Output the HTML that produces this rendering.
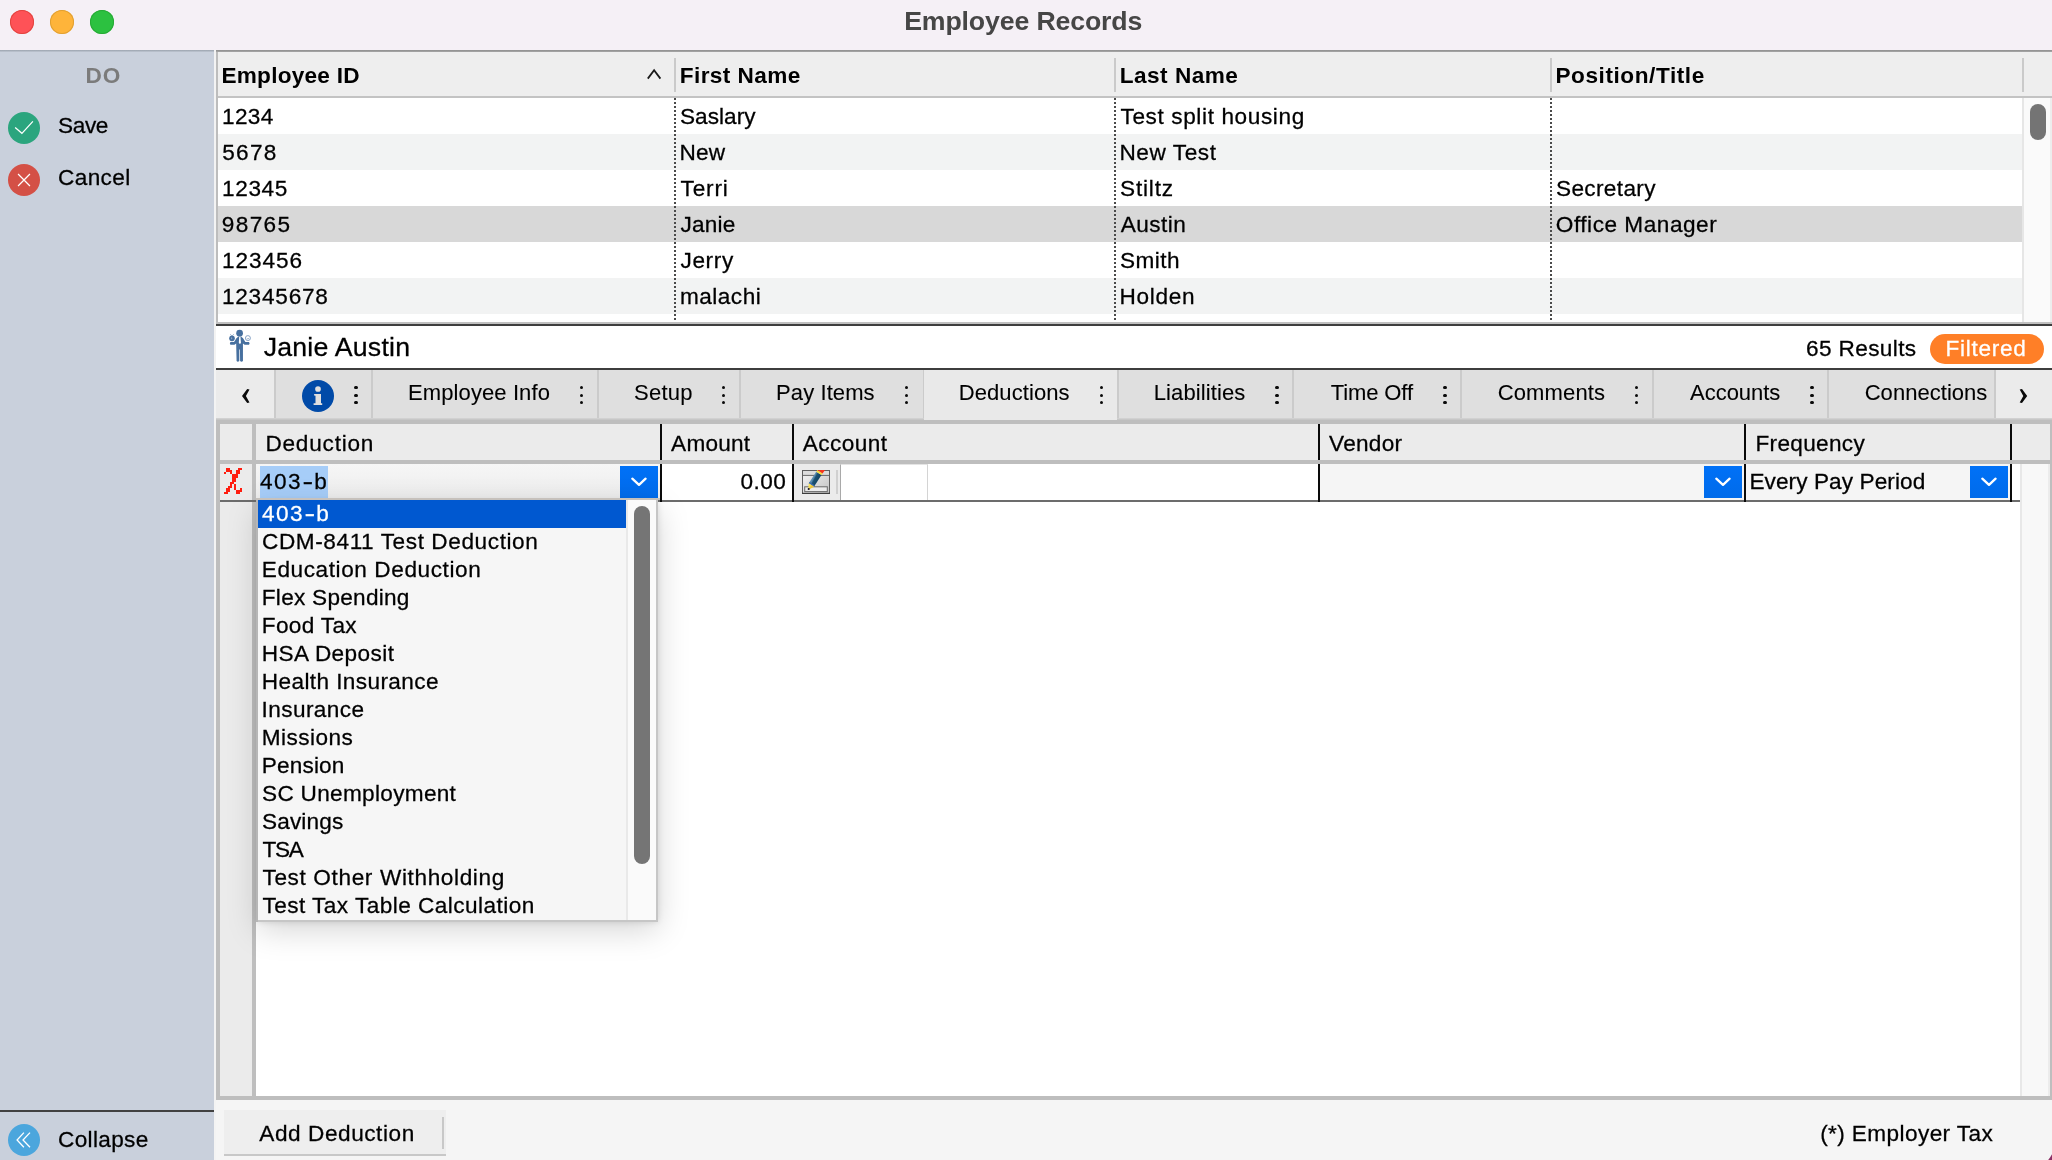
<!DOCTYPE html>
<html><head><meta charset="utf-8"><title>Employee Records</title>
<style>
*{box-sizing:border-box;margin:0;padding:0}
html,body{width:2052px;height:1160px;overflow:hidden}
body{position:relative;background:#f5f5f5;font-family:"Liberation Sans",sans-serif;font-size:22px;color:#000;letter-spacing:0.7px}
.a{position:absolute}
.t{position:absolute;white-space:nowrap;line-height:26px;height:26px;-webkit-text-stroke:0.28px}
#txt{position:absolute;left:0;top:0;width:2052px;height:1160px;will-change:transform}
.b{font-weight:bold;-webkit-text-stroke:0}
#titlebar{left:0;top:0;width:2052px;height:50px;background:#f5f0f6}
.tl{position:absolute;top:10px;width:24px;height:24px;border-radius:12px}
#sidebar{left:0;top:50px;width:214px;height:1110px;background:#c9d0dc}
.circ{position:absolute;left:8px;width:32px;height:32px;border-radius:16px}
.hsep{position:absolute;top:58px;width:2px;height:34px;background:#cacaca}
.dot{position:absolute;top:98px;width:2px;height:222px;background-image:linear-gradient(to bottom,#4a4a4a 50%,rgba(255,255,255,0) 50%);background-size:2px 4px}
.row{position:absolute;left:218px;width:1804px;height:36px}
.tab{position:absolute;top:370px;height:48px;background:#dfdfdf;font-size:22px;letter-spacing:0}
.tab.sel{background:#e9e9e9;height:50px}

.kebab{position:absolute;width:3.3px;height:3.3px;border-radius:1.65px;background:#0a0a0a}
.vsep{position:absolute;top:424px;width:2px;height:78px;background:#0a0a0a}
.dd{position:absolute;top:466px;width:38px;height:32px;background:linear-gradient(#0071f7,#006bea)}
.li{position:absolute;left:0;width:368px;height:28px}
</style></head>
<body>
<div class="a" id="titlebar">
<div class="tl" style="left:10px;background:#fe5257;box-shadow:inset 0 0 0 1px #e2443f"></div>
<div class="tl" style="left:50px;background:#feb43a;box-shadow:inset 0 0 0 1px #e1a032"></div>
<div class="tl" style="left:90px;background:#2cc140;box-shadow:inset 0 0 0 1px #27aa35"></div>
</div>
<div class="a" style="left:216px;top:50px;width:1836px;height:2px;background:linear-gradient(#8e8e8e,#a8a8a8)"></div>
<div class="a" id="sidebar"></div>
<div class="a" style="left:0;top:50px;width:214px;height:2px;background:linear-gradient(#9aa2ad,#c0c7d3)"></div>
<div class="circ" style="top:112px;background:#2ba57e"><svg width="32" height="32" viewBox="0 0 32 32"><path d="M7.15 15.5 L13.9 21.3 L24.9 9.3" fill="none" stroke="#fff" stroke-width="1.25"/></svg></div>
<div class="circ" style="top:164px;background:#d45046"><svg width="32" height="32" viewBox="0 0 32 32"><path d="M10.05 10.05 L21.95 21.95 M21.95 10.05 L10.05 21.95" fill="none" stroke="#fff" stroke-width="1.25"/></svg></div>
<div class="a" style="left:0;top:1110px;width:214px;height:2px;background:#414141"></div>
<div class="circ" style="top:1124px;background:#4ba6dd"><svg width="32" height="32" viewBox="0 0 32 32"><path d="M15.9 8.6 L9.07 16 L15.9 23.2 M22 8.6 L15 16 L22 23.2" fill="none" stroke="#fff" stroke-width="1.3"/></svg></div>
<div class="a" style="left:214px;top:50px;width:2px;height:1110px;background:#f3f3f3"></div>
<div class="a" style="left:216px;top:52px;width:1836px;height:270px;background:#fff"></div>
<div class="a" style="left:216px;top:52px;width:1836px;height:44px;background:#eeeeee"></div>
<div class="a" style="left:216px;top:96px;width:1836px;height:2px;background:#c3c3c3"></div>
<div class="row" style="top:98px;background:#ffffff"></div>
<div class="row" style="top:134px;background:#f2f3f3"></div>
<div class="row" style="top:170px;background:#ffffff"></div>
<div class="row" style="top:206px;background:#d8d8d8"></div>
<div class="row" style="top:242px;background:#ffffff"></div>
<div class="row" style="top:278px;background:#f2f3f3"></div>
<div class="hsep" style="left:674px"></div>
<div class="hsep" style="left:1114px"></div>
<div class="hsep" style="left:1550px"></div>
<div class="hsep" style="left:2022px"></div>
<div class="dot" style="left:674px"></div>
<div class="dot" style="left:1114px"></div>
<div class="dot" style="left:1550px"></div>
<svg class="a" style="left:644px;top:64px" width="20" height="20" viewBox="0 0 20 20"><path d="M3.8 14.6 L10.1 6.3 L16.4 14.6" fill="none" stroke="#1a1a1a" stroke-width="1.8"/></svg>
<div class="a" style="left:2022px;top:98px;width:28px;height:224px;background:#fafafa;border-left:2px solid #e6e6e6"></div>
<div class="a" style="left:2050px;top:98px;width:2px;height:224px;background:#ededed"></div>
<div class="a" style="left:2030px;top:104px;width:16px;height:36px;border-radius:8px;background:#747474"></div>
<div class="a" style="left:216px;top:52px;width:2px;height:272px;background:#bdbdbd"></div>
<div class="a" style="left:216px;top:322px;width:1836px;height:2px;background:#c0c0c0"></div>
<div class="a" style="left:216px;top:324px;width:1836px;height:2px;background:#3e3e3e"></div>
<div class="a" style="left:216px;top:326px;width:1836px;height:42px;background:#fff"></div>
<div class="a" style="left:216px;top:368px;width:1836px;height:2px;background:#3e3e3e"></div>
<svg class="a" style="left:228px;top:329px" width="24" height="34" viewBox="0 0 24 34">
<circle cx="11.6" cy="4.2" r="3.35" fill="#47709f"/>
<path d="M10.2 7.8 L13.3 7.8 Q15 8.6 16.9 12.2 L17.4 13 L21 13 Q22.2 14.4 21 15.8 L16.6 15.8 L14.95 14.4 L14.95 32 Q13.5 33.6 12.1 32 L11.95 20.6 L11.3 20.6 L11.3 32 Q9.7 33.6 8.6 32 L8.15 14.4 L6.5 15.8 L2.4 15.8 Q1.3 14.4 2.4 13 L6 13 L6.6 12.2 Q8.4 8.6 10.2 7.8 Z" fill="#47709f"/>
<path d="M11.15 8 L12.5 8 L12.95 14 L11.95 15.1 L10.85 14 Z" fill="#fff"/>
<ellipse cx="4" cy="9.3" rx="2.8" ry="2.9" fill="#47709f"/><path d="M2.3 5.3 L3.6 6.6 M5.7 5.3 L4.4 6.6" stroke="#47709f" stroke-width="0.6" fill="none"/>
<path d="M3.4 8 Q5.2 9.3 3.4 10.6 Z" fill="#b9c8dc"/>
<circle cx="19.9" cy="9.1" r="2.5" fill="#fff" stroke="#7c9abf" stroke-width="0.9"/><path d="M18.8 9.4 Q19.9 10.6 21 9.4" stroke="#6f8fb8" stroke-width="0.7" fill="none"/>
</svg>
<div class="a" style="left:1930px;top:334px;width:114px;height:30px;border-radius:15px;background:#ff7f27"></div>
<div class="a" style="left:216px;top:370px;width:1836px;height:48px;background:#cbcbcb"></div>
<div class="a" style="left:216px;top:370px;width:58px;height:48px;background:#ebebeb"></div>
<div class="a" style="left:1996px;top:370px;width:56px;height:48px;background:#ebebeb"></div>
<div class="tab" style="left:276px;width:95px"></div>
<div class="kebab" style="left:354.35px;top:386.1px"></div>
<div class="kebab" style="left:354.35px;top:393.6px"></div>
<div class="kebab" style="left:354.35px;top:401.1px"></div>
<div class="tab" style="left:373px;width:224px"></div>
<div class="kebab" style="left:579.85px;top:386.1px"></div>
<div class="kebab" style="left:579.85px;top:393.6px"></div>
<div class="kebab" style="left:579.85px;top:401.1px"></div>
<div class="tab" style="left:599px;width:140px"></div>
<div class="kebab" style="left:722.1px;top:386.1px"></div>
<div class="kebab" style="left:722.1px;top:393.6px"></div>
<div class="kebab" style="left:722.1px;top:401.1px"></div>
<div class="tab" style="left:741px;width:182px"></div>
<div class="kebab" style="left:905.1px;top:386.1px"></div>
<div class="kebab" style="left:905.1px;top:393.6px"></div>
<div class="kebab" style="left:905.1px;top:401.1px"></div>
<div class="tab sel" style="left:924px;width:193px"></div>
<div class="kebab" style="left:1100.1px;top:386.1px"></div>
<div class="kebab" style="left:1100.1px;top:393.6px"></div>
<div class="kebab" style="left:1100.1px;top:401.1px"></div>
<div class="tab" style="left:1119px;width:173px"></div>
<div class="kebab" style="left:1275.35px;top:386.1px"></div>
<div class="kebab" style="left:1275.35px;top:393.6px"></div>
<div class="kebab" style="left:1275.35px;top:401.1px"></div>
<div class="tab" style="left:1294px;width:166px"></div>
<div class="kebab" style="left:1443.35px;top:386.1px"></div>
<div class="kebab" style="left:1443.35px;top:393.6px"></div>
<div class="kebab" style="left:1443.35px;top:401.1px"></div>
<div class="tab" style="left:1462px;width:190px"></div>
<div class="kebab" style="left:1634.85px;top:386.1px"></div>
<div class="kebab" style="left:1634.85px;top:393.6px"></div>
<div class="kebab" style="left:1634.85px;top:401.1px"></div>
<div class="tab" style="left:1654px;width:173px"></div>
<div class="kebab" style="left:1810.35px;top:386.1px"></div>
<div class="kebab" style="left:1810.35px;top:393.6px"></div>
<div class="kebab" style="left:1810.35px;top:401.1px"></div>
<div class="tab" style="left:1829px;width:165px"></div>
<svg class="a" style="left:236px;top:384px" width="20" height="24" viewBox="236 384 20 24"><path d="M247.2 389 L249.5 389.4 L245.9 396 L249.5 402.6 L247.2 403 L242 396 Z" fill="#0a0a0a"/></svg>
<svg class="a" style="left:2013px;top:384px" width="20" height="24" viewBox="2013 384 20 24"><path d="M2022 389 L2019.7 389.4 L2023.3 396 L2019.7 402.6 L2022 403 L2027.2 396 Z" fill="#0a0a0a"/></svg>
<svg class="a" style="left:302px;top:380px" width="32" height="32" viewBox="0 0 32 32"><circle cx="16" cy="16" r="16" fill="#004aa8"/><circle cx="16" cy="9" r="2.85" fill="#dfdfdf"/><path d="M12 13.9 L19 13.9 L19 23.2 L20.2 23.2 L20.2 25.1 L11.6 25.1 L11.6 23.2 L13.5 23.2 L13.5 15.8 L12.4 15.8 Z" fill="#dfdfdf"/></svg>
<div class="a" style="left:216px;top:418px;width:1836px;height:682px;background:#bebebe"></div>
<div class="a" style="left:216px;top:418px;width:708px;height:2px;background:linear-gradient(#d6d6d6,#c2c2c2)"></div>
<div class="a" style="left:1117px;top:418px;width:935px;height:2px;background:linear-gradient(#d6d6d6,#c2c2c2)"></div>
<div class="a" style="left:924px;top:418px;width:193px;height:2px;background:#e9e9e9"></div>
<div class="a" style="left:220px;top:424px;width:1830px;height:36px;background:#ebebeb"></div>
<div class="a" style="left:220px;top:464px;width:32px;height:632px;background:#ebebeb"></div>
<div class="a" style="left:256px;top:464px;width:1764px;height:632px;background:#fff"></div>
<div class="a" style="left:252px;top:424px;width:4px;height:36px;background:#bebebe"></div>
<div class="a" style="left:2020px;top:464px;width:30px;height:632px;background:#f8f8f8;border-left:2px solid #e8e8e8;border-right:2px solid #ececec"></div>
<div class="a" style="left:256px;top:464px;width:404px;height:36px;background:linear-gradient(#f6f6f6,#ececec)"></div>
<div class="a" style="left:662px;top:464px;width:130px;height:36px;background:#fff"></div>
<div class="a" style="left:794px;top:464px;width:46px;height:36px;background:#ebebeb"></div>
<div class="a" style="left:840px;top:464px;width:88px;height:36px;background:#fff;border-right:1.5px solid #d4d4d4;border-left:1.5px solid #a9a9a9;border-top:1px solid #e4e4e4"></div>
<div class="a" style="left:836px;top:470px;width:2px;height:24px;background:#d0d0d0"></div>
<div class="a" style="left:1320px;top:464px;width:424px;height:36px;background:#f5f5f5"></div>
<div class="a" style="left:1746px;top:464px;width:264px;height:36px;background:#f5f5f5"></div>
<div class="a" style="left:220px;top:500px;width:1800px;height:2px;background:#6c6c6c"></div>
<div class="vsep" style="left:660px"></div>
<div class="vsep" style="left:792px"></div>
<div class="vsep" style="left:1318px"></div>
<div class="vsep" style="left:1744px"></div>
<div class="vsep" style="left:2010px"></div>
<div class="a" style="left:220px;top:460px;width:1830px;height:4px;background:#bebebe"></div>
<svg class="a" style="left:224px;top:468px" width="18" height="26" viewBox="0 0 18 26" shape-rendering="crispEdges"><g fill="#ff1d0f"><rect x="2" y="0" width="2" height="2"/><rect x="4" y="0" width="2" height="2"/><rect x="14" y="0" width="2" height="2"/><rect x="16" y="0" width="2" height="2"/><rect x="2" y="2" width="2" height="2"/><rect x="4" y="2" width="2" height="2"/><rect x="6" y="2" width="2" height="2"/><rect x="12" y="2" width="2" height="2"/><rect x="14" y="2" width="2" height="2"/><rect x="0" y="4" width="2" height="2"/><rect x="6" y="4" width="2" height="2"/><rect x="12" y="4" width="2" height="2"/><rect x="14" y="4" width="2" height="2"/><rect x="8" y="6" width="2" height="2"/><rect x="10" y="6" width="2" height="2"/><rect x="12" y="6" width="2" height="2"/><rect x="8" y="8" width="2" height="2"/><rect x="10" y="8" width="2" height="2"/><rect x="12" y="8" width="2" height="2"/><rect x="8" y="10" width="2" height="2"/><rect x="10" y="10" width="2" height="2"/><rect x="8" y="12" width="2" height="2"/><rect x="10" y="12" width="2" height="2"/><rect x="6" y="14" width="2" height="2"/><rect x="8" y="14" width="2" height="2"/><rect x="6" y="16" width="2" height="2"/><rect x="10" y="16" width="2" height="2"/><rect x="4" y="18" width="2" height="2"/><rect x="6" y="18" width="2" height="2"/><rect x="10" y="18" width="2" height="2"/><rect x="2" y="20" width="2" height="2"/><rect x="4" y="20" width="2" height="2"/><rect x="10" y="20" width="2" height="2"/><rect x="16" y="20" width="2" height="2"/><rect x="2" y="22" width="2" height="2"/><rect x="4" y="22" width="2" height="2"/><rect x="12" y="22" width="2" height="2"/><rect x="14" y="22" width="2" height="2"/><rect x="16" y="22" width="2" height="2"/><rect x="0" y="24" width="2" height="2"/><rect x="2" y="24" width="2" height="2"/><rect x="12" y="24" width="2" height="2"/><rect x="14" y="24" width="2" height="2"/></g></svg>
<div class="a" style="left:260px;top:466px;width:68px;height:32px;background:#a6cdf8"></div>
<div class="dd" style="left:620px"><svg width="38" height="32" viewBox="0 0 38 32"><path d="M12.3 12.7 L19 18.9 L25.6 12.7" fill="none" stroke="#fff" stroke-width="2.3" stroke-linecap="round" stroke-linejoin="round"/></svg></div>
<div class="dd" style="left:1704px"><svg width="38" height="32" viewBox="0 0 38 32"><path d="M12.3 12.7 L19 18.9 L25.6 12.7" fill="none" stroke="#fff" stroke-width="2.3" stroke-linecap="round" stroke-linejoin="round"/></svg></div>
<div class="dd" style="left:1970px"><svg width="38" height="32" viewBox="0 0 38 32"><path d="M12.3 12.7 L19 18.9 L25.6 12.7" fill="none" stroke="#fff" stroke-width="2.3" stroke-linecap="round" stroke-linejoin="round"/></svg></div>
<svg class="a" style="left:802px;top:470px" width="28" height="24" viewBox="0 0 28 24"><defs><linearGradient id="g1" x1="0" y1="0" x2="1" y2="1"><stop offset="0.2" stop-color="#ececec"/><stop offset="1" stop-color="#c2c2c2"/></linearGradient><linearGradient id="g2" x1="0" y1="0" x2="1" y2="0.65"><stop offset="0" stop-color="#4f83a8"/><stop offset="0.45" stop-color="#5a8db0"/><stop offset="0.55" stop-color="#1d5273"/><stop offset="1" stop-color="#0c3c58"/></linearGradient></defs>
<rect x="0.5" y="0.5" width="27" height="23" fill="url(#g1)" stroke="#5e5e5e"/><rect x="1" y="1" width="26" height="4" fill="#dcdcdc"/><line x1="1" y1="5.4" x2="27" y2="5.4" stroke="#666" stroke-width="1"/><line x1="0" y1="23.4" x2="28" y2="23.4" stroke="#3c3c3c" stroke-width="1.2"/>
<rect x="2.7" y="16.8" width="22.6" height="4.8" fill="#ececec" stroke="#6a6a6a" stroke-width="1"/>
<path d="M6.76 13.27 L14.27 1.69 L19.47 5.07 L11.96 16.65 Z" fill="url(#g2)"/>
<path d="M6.76 13.27 L7.6 12 L12.8 15.4 L11.96 16.65 Z" fill="#3b6cae"/>
<path d="M14.27 1.69 L15.36 0.02 L20.56 3.4 L19.47 5.07 Z" fill="#f6dc3c"/>
<path d="M15.36 0.02 L15.2 0 L23 0 L20.56 3.4 Z" fill="#f5361c"/>
<path d="M6.76 13.27 L11.96 16.65 L6.2 19.7 Z" fill="#f7e25a"/><path d="M9.4 15 L11.96 16.65 L6.2 19.7 Z" fill="#eec53c"/>
<circle cx="6.7" cy="19" r="1.05" fill="#14142a"/></svg>
<div class="a" style="left:258px;top:500px;width:400px;height:420px;background:#f6f6f6;box-shadow:0 10px 30px rgba(0,0,0,.17),0 2px 6px rgba(0,0,0,.12)">
<div class="a" style="left:-2px;top:-2px;width:404px;height:2px;background:#c6c1bc"></div>
<div class="a" style="left:-2px;top:0;width:2px;height:422px;background:#b6b6b6"></div>
<div class="a" style="left:368px;top:0;width:30px;height:420px;background:#fafafa;border-left:2px solid #e9e9e9"></div>
<div class="a" style="left:398px;top:0;width:2px;height:422px;background:#c6c6c6"></div>
<div class="a" style="left:0;top:420px;width:400px;height:2px;background:#c6c6c6"></div>
<div class="a" style="left:376px;top:6px;width:16px;height:358px;border-radius:8px;background:#757575"></div>
<div class="li" style="top:0;height:28px;background:#0058d0"></div>
</div>
<div class="a" style="left:224px;top:1110px;width:222px;height:44px;background:#eeeeee"></div>
<div class="a" style="left:224px;top:1154px;width:222px;height:2px;background:#c8c8c8"></div>
<div class="a" style="left:442px;top:1117px;width:2px;height:32px;background:#c8c8c8"></div>
<svg class="a" style="left:2040px;top:1148px" width="12" height="12" viewBox="0 0 12 12"><path d="M12 6.3 Q10.3 9.5 8.2 12 L12 12 Z" fill="#8c2f66"/></svg>
<div id="txt">
<div class="t b" style="left:904.2px;top:5.05px;font-size:26.7px;line-height:32px;height:32px;letter-spacing:-0.143px;color:#464646;">Employee Records</div>
<div class="t b" style="left:85.44px;top:62.97px;font-size:22.6px;line-height:26px;height:26px;letter-spacing:1.115px;color:#7b7b7b;">DO</div>
<div class="t " style="left:58.03px;top:112.67px;font-size:22.6px;line-height:26px;height:26px;letter-spacing:-0.375px;">Save</div>
<div class="t " style="left:57.99px;top:164.97px;font-size:22.6px;line-height:26px;height:26px;letter-spacing:0.387px;">Cancel</div>
<div class="t " style="left:57.99px;top:1126.97px;font-size:22.6px;line-height:26px;height:26px;letter-spacing:0.333px;">Collapse</div>
<div class="t " style="left:221.93px;top:104.07px;font-size:22.6px;line-height:26px;height:26px;letter-spacing:0.404px;">1234</div>
<div class="t " style="left:680.03px;top:104.07px;font-size:22.6px;line-height:26px;height:26px;letter-spacing:0.020px;">Saslary</div>
<div class="t " style="left:1120.5px;top:104.07px;font-size:22.6px;line-height:26px;height:26px;letter-spacing:0.613px;">Test split housing</div>
<div class="t " style="left:222.19px;top:140.07px;font-size:22.6px;line-height:26px;height:26px;letter-spacing:1.299px;">5678</div>
<div class="t " style="left:679.42px;top:140.07px;font-size:22.6px;line-height:26px;height:26px;letter-spacing:0.226px;">New</div>
<div class="t " style="left:1119.42px;top:140.07px;font-size:22.6px;line-height:26px;height:26px;letter-spacing:0.575px;">New Test</div>
<div class="t " style="left:221.93px;top:176.07px;font-size:22.6px;line-height:26px;height:26px;letter-spacing:0.664px;">12345</div>
<div class="t " style="left:680.5px;top:176.07px;font-size:22.6px;line-height:26px;height:26px;letter-spacing:0.831px;">Terri</div>
<div class="t " style="left:1120.03px;top:176.07px;font-size:22.6px;line-height:26px;height:26px;letter-spacing:0.825px;">Stiltz</div>
<div class="t " style="left:1556.03px;top:176.07px;font-size:22.6px;line-height:26px;height:26px;letter-spacing:0.346px;">Secretary</div>
<div class="t " style="left:221.8px;top:212.07px;font-size:22.6px;line-height:26px;height:26px;letter-spacing:1.357px;">98765</div>
<div class="t " style="left:680.44px;top:212.07px;font-size:22.6px;line-height:26px;height:26px;letter-spacing:0.241px;">Janie</div>
<div class="t " style="left:1120.81px;top:212.07px;font-size:22.6px;line-height:26px;height:26px;letter-spacing:0.424px;">Austin</div>
<div class="t " style="left:1555.83px;top:212.07px;font-size:22.6px;line-height:26px;height:26px;letter-spacing:0.522px;">Office Manager</div>
<div class="t " style="left:221.93px;top:248.07px;font-size:22.6px;line-height:26px;height:26px;letter-spacing:0.934px;">123456</div>
<div class="t " style="left:680.45px;top:248.07px;font-size:22.6px;line-height:26px;height:26px;letter-spacing:0.645px;">Jerry</div>
<div class="t " style="left:1120.03px;top:248.07px;font-size:22.6px;line-height:26px;height:26px;letter-spacing:0.476px;">Smith</div>
<div class="t " style="left:221.93px;top:284.07px;font-size:22.6px;line-height:26px;height:26px;letter-spacing:0.776px;">12345678</div>
<div class="t " style="left:679.88px;top:284.07px;font-size:22.6px;line-height:26px;height:26px;letter-spacing:0.503px;">malachi</div>
<div class="t " style="left:1119.42px;top:284.07px;font-size:22.6px;line-height:26px;height:26px;letter-spacing:0.713px;">Holden</div>
<div class="t b" style="left:221.46px;top:63.23px;font-size:22.6px;line-height:26px;height:26px;letter-spacing:0.242px;">Employee ID</div>
<div class="t b" style="left:679.7px;top:63.23px;font-size:22.6px;line-height:26px;height:26px;letter-spacing:0.437px;">First Name</div>
<div class="t b" style="left:1119.7px;top:63.23px;font-size:22.6px;line-height:26px;height:26px;letter-spacing:0.492px;">Last Name</div>
<div class="t b" style="left:1555.46px;top:63.23px;font-size:22.6px;line-height:26px;height:26px;letter-spacing:0.565px;">Position/Title</div>
<div class="t " style="left:263.67px;top:330.75px;font-size:26.7px;line-height:32px;height:32px;letter-spacing:0.226px;">Janie Austin</div>
<div class="t " style="left:1806.0px;top:335.97px;font-size:22.6px;line-height:26px;height:26px;letter-spacing:0.375px;">65 Results</div>
<div class="t " style="left:1945.61px;top:335.97px;font-size:22.6px;line-height:26px;height:26px;letter-spacing:0.691px;color:#fff;">Filtered</div>
<div class="t " style="left:408.03px;top:379.98px;letter-spacing:0.103px;-webkit-text-stroke:0.1px;">Employee Info</div>
<div class="t " style="left:634.09px;top:379.98px;letter-spacing:0.223px;-webkit-text-stroke:0.1px;">Setup</div>
<div class="t " style="left:776.12px;top:379.98px;letter-spacing:0.081px;-webkit-text-stroke:0.1px;">Pay Items</div>
<div class="t " style="left:958.72px;top:379.98px;letter-spacing:0.088px;-webkit-text-stroke:0.1px;">Deductions</div>
<div class="t " style="left:1153.73px;top:379.98px;letter-spacing:0.110px;-webkit-text-stroke:0.1px;">Liabilities</div>
<div class="t " style="left:1330.76px;top:379.98px;letter-spacing:-0.113px;-webkit-text-stroke:0.1px;">Time Off</div>
<div class="t " style="left:1497.7px;top:379.98px;letter-spacing:0.136px;-webkit-text-stroke:0.1px;">Comments</div>
<div class="t " style="left:1690.08px;top:379.98px;letter-spacing:-0.036px;-webkit-text-stroke:0.1px;">Accounts</div>
<div class="t " style="left:1864.7px;top:379.98px;letter-spacing:0.038px;-webkit-text-stroke:0.1px;">Connections</div>
<div class="t " style="left:265.41px;top:431.47px;font-size:22.6px;line-height:26px;height:26px;letter-spacing:0.782px;">Deduction</div>
<div class="t " style="left:671.12px;top:431.47px;font-size:22.6px;line-height:26px;height:26px;letter-spacing:0.234px;">Amount</div>
<div class="t " style="left:802.81px;top:431.47px;font-size:22.6px;line-height:26px;height:26px;letter-spacing:0.434px;">Account</div>
<div class="t " style="left:1329.07px;top:431.47px;font-size:22.6px;line-height:26px;height:26px;letter-spacing:0.262px;">Vendor</div>
<div class="t " style="left:1755.4px;top:431.47px;font-size:22.6px;line-height:26px;height:26px;letter-spacing:0.332px;">Frequency</div>
<div class="t " style="left:260.04px;top:469.37px;font-size:22.6px;line-height:26px;height:26px;letter-spacing:0;"><span style="letter-spacing:1.38px">40</span><span style="letter-spacing:3.78px">3</span><span style="display:inline-block;transform:scaleX(1.41)">-</span><span style="margin-left:2.39px">b</span></div>
<div class="t " style="left:740.44px;top:469.37px;font-size:22.6px;line-height:26px;height:26px;letter-spacing:0.507px;">0.00</div>
<div class="t " style="left:1749.4px;top:469.37px;font-size:22.6px;line-height:26px;height:26px;letter-spacing:0.085px;">Every Pay Period</div>
<div class="t " style="left:262.04px;top:501.12px;font-size:22.6px;line-height:26px;height:26px;letter-spacing:0;color:#fff;"><span style="letter-spacing:1.38px">40</span><span style="letter-spacing:3.78px">3</span><span style="display:inline-block;transform:scaleX(1.41)">-</span><span style="margin-left:2.39px">b</span></div>
<div class="t " style="left:261.99px;top:529.12px;font-size:22.6px;line-height:26px;height:26px;letter-spacing:0.589px;">CDM-8411 Test Deduction</div>
<div class="t " style="left:261.79px;top:557.12px;font-size:22.6px;line-height:26px;height:26px;letter-spacing:0.582px;">Education Deduction</div>
<div class="t " style="left:261.79px;top:585.12px;font-size:22.6px;line-height:26px;height:26px;letter-spacing:0.268px;">Flex Spending</div>
<div class="t " style="left:261.79px;top:613.12px;font-size:22.6px;line-height:26px;height:26px;letter-spacing:0.324px;">Food Tax</div>
<div class="t " style="left:261.79px;top:641.12px;font-size:22.6px;line-height:26px;height:26px;letter-spacing:0.407px;">HSA Deposit</div>
<div class="t " style="left:261.79px;top:669.12px;font-size:22.6px;line-height:26px;height:26px;letter-spacing:0.394px;">Health Insurance</div>
<div class="t " style="left:261.58px;top:697.12px;font-size:22.6px;line-height:26px;height:26px;letter-spacing:0.402px;">Insurance</div>
<div class="t " style="left:261.79px;top:725.12px;font-size:22.6px;line-height:26px;height:26px;letter-spacing:0.454px;">Missions</div>
<div class="t " style="left:261.79px;top:753.12px;font-size:22.6px;line-height:26px;height:26px;letter-spacing:0.164px;">Pension</div>
<div class="t " style="left:262.02px;top:781.12px;font-size:22.6px;line-height:26px;height:26px;letter-spacing:0.305px;">SC Unemployment</div>
<div class="t " style="left:262.02px;top:809.12px;font-size:22.6px;line-height:26px;height:26px;letter-spacing:0.132px;">Savings</div>
<div class="t " style="left:262.5px;top:837.12px;font-size:22.6px;line-height:26px;height:26px;letter-spacing:-1.258px;">TSA</div>
<div class="t " style="left:262.5px;top:865.12px;font-size:22.6px;line-height:26px;height:26px;letter-spacing:0.630px;">Test Other Withholding</div>
<div class="t " style="left:262.5px;top:893.12px;font-size:22.6px;line-height:26px;height:26px;letter-spacing:0.454px;">Test Tax Table Calculation</div>
<div class="t " style="left:259.34px;top:1121.47px;font-size:22.6px;line-height:26px;height:26px;letter-spacing:0.554px;">Add Deduction</div>
<div class="t " style="left:1820.13px;top:1121.27px;font-size:22.6px;line-height:26px;height:26px;letter-spacing:0.407px;">(*) Employer Tax</div>
</div>
</body></html>
